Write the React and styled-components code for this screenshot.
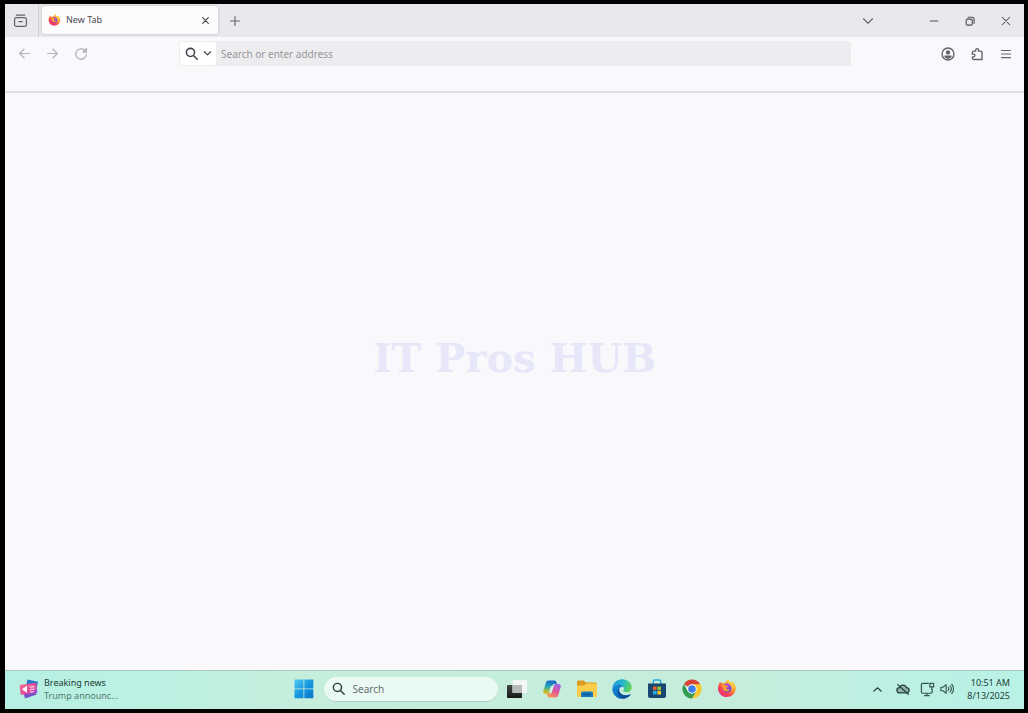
import React from "react";
import styled, { createGlobalStyle } from "styled-components";

const GlobalStyle = createGlobalStyle`
  *, *::before, *::after { box-sizing: border-box; }
  body {
    margin: 0;
    background: #000;
    font-family: "Noto Sans", "Open Sans", sans-serif;
  }
  button, input { font: inherit; color: inherit; }
  svg { display: block; flex: none; }
`;

const Desktop = styled.div`
  display: flex;
  flex-direction: column;
  min-height: 100vh;
  padding: 4px 4px 4px 5px;
  background: #000;
`;

const Browser = styled.section`
  flex: 1;
  display: flex;
  flex-direction: column;
  background: #f9f9fb;
`;

const TabStrip = styled.header`
  display: flex;
  align-items: stretch;
  height: 33px;
  background: #e9e8ed;
  color: #65646c;
`;

const IconButton = styled.button`
  display: flex;
  align-items: center;
  justify-content: center;
  flex: none;
  width: ${(p) => p.$width || 28}px;
  padding: 0;
  border: 0;
  background: transparent;
  color: ${(p) => p.$color || "#65646c"};
`;

const RecentButton = styled(IconButton)`
  padding-right: 2px;
  border-right: 1px solid #cecdd3;
`;

const Tab = styled.div`
  display: flex;
  align-items: center;
  gap: 5px;
  width: 176px;
  margin: 2px 0 3px 3px;
  padding-left: 6px;
  border-radius: 3px;
  background: #fcfcfd;
  box-shadow: 0 0 3px #b9b8be;
`;

const TabTitle = styled.span`
  flex: 1;
  font-size: 9px;
  line-height: 12px;
  color: #4b4a52;
`;

const WindowControls = styled.div`
  display: flex;
  margin-left: auto;
`;

const TabListButton = styled(IconButton)`
  margin-right: 30px;
`;

const Toolbar = styled.div`
  display: flex;
  height: 56px;
  padding: 4px 4px 0 5px;
  border-bottom: 2px solid #e2e2e5;
`;

const ToolGroup = styled.div`
  display: flex;
  width: 169px;
  height: 25px;
  justify-content: ${(p) => (p.$end ? "flex-end" : "flex-start")};
`;

const AddressBar = styled.form`
  display: flex;
  flex: 1;
  height: 25px;
  padding: 1px;
  border-radius: 3px;
  background: #ededef;
`;

const EngineButton = styled.button`
  display: flex;
  align-items: center;
  justify-content: center;
  gap: 5px;
  width: 36px;
  padding: 0;
  border: 0;
  border-radius: 2px;
  background: #fff;
  color: #45444c;
`;

const AddressInput = styled.input`
  flex: 1;
  min-width: 0;
  padding: 0 5px;
  border: 0;
  outline: 0;
  background: transparent;
  font-size: 10px;
  &::placeholder { color: #98979d; opacity: 1; }
`;

const Page = styled.main`
  flex: 1;
  display: flex;
  align-items: center;
  justify-content: center;
  padding-bottom: 48px;
`;

const Watermark = styled.h1`
  margin: 0;
  font: 700 40px/44px "DejaVu Serif", serif;
  color: #e7e7f9;
`;

const Taskbar = styled.footer`
  display: grid;
  grid-template-columns: 1fr auto 1fr;
  height: 39px;
  padding-bottom: 2px;
  border-top: 1px solid #aacbc1;
  background: linear-gradient(90deg, #b6f0e3 0%, #bcf1e2 14%, #c5eedd 28%, #c6eddc 72%, #bcf0e3 88%, #b9f1e5 100%);
  color: #28423d;
`;

const NewsButton = styled.button`
  display: flex;
  align-items: center;
  justify-self: start;
  gap: 5px;
  padding: 0 0 0 14px;
  border: 0;
  background: transparent;
  text-align: left;
  font-size: 9px;
  line-height: 13px;
`;

const Line = styled.span`
  display: block;
  color: ${(p) => (p.$muted ? "#527b70" : "#203d36")};
`;

const AppRow = styled.nav`
  display: flex;
  align-items: stretch;
  margin-left: 2px;
`;

const SearchBox = styled.label`
  display: flex;
  align-items: center;
  gap: 8px;
  align-self: center;
  width: 174px;
  height: 25px;
  margin: 0 2px;
  padding: 0 8px;
  border-radius: 13px;
  border-bottom: 1px solid #a7cfc0;
  background: #ebf9f4;
`;

const SearchInput = styled.input`
  min-width: 0;
  width: 100%;
  padding: 0;
  border: 0;
  outline: 0;
  background: transparent;
  font-size: 10px;
  line-height: 16px;
  &::placeholder { color: #65716e; opacity: 1; }
`;

const Tray = styled.div`
  display: flex;
  justify-self: end;
  padding-right: 14px;
`;

const Clock = styled.time`
  align-self: center;
  margin-left: 11px;
  text-align: right;
  font-size: 9px;
  line-height: 13px;
  color: #25403b;
`;

const Glyph = ({ size = 14, w = 1.3, children }) => (
  <svg width={size} height={size} viewBox="0 0 16 16" fill="none" stroke="currentColor" strokeWidth={w} strokeLinecap="round" strokeLinejoin="round" aria-hidden="true">
    {children}
  </svg>
);

const Magnifier = ({ size = 14, w = 1.9 }) => (
  <Glyph size={size} w={w}>
    <circle cx="6.7" cy="6.7" r="5" />
    <path d="M10.4 10.4 15 15" />
  </Glyph>
);

const Firefox = ({ size = 20 }) => {
  const id = React.useId();
  return (
    <svg width={size} height={size} viewBox="0 0 20 20" aria-hidden="true">
      <defs>
        <linearGradient id={id + "a"} x1="0.85" y1="0.1" x2="0.2" y2="0.95">
          <stop offset="0" stopColor="#ffe14a" />
          <stop offset="0.35" stopColor="#ff9a2c" />
          <stop offset="0.7" stopColor="#fb4653" />
          <stop offset="1" stopColor="#e32b80" />
        </linearGradient>
        <linearGradient id={id + "b"} x1="0.6" y1="0" x2="0.4" y2="1">
          <stop offset="0" stopColor="#a34ee0" />
          <stop offset="1" stopColor="#6b49c8" />
        </linearGradient>
      </defs>
      <path fill={`url(#${id}a)`} d="M3.2 2.4 4.700 4.500C6 4 6.800 4.100 7.600 4.200 8.700 2.900 9.700 1.700 11.200 0c.3 2.100 1.800 2.900 3.100 4.100.3-.7.2-1.500.2-2.200C17.500 4 19.200 6.700 18.800 10c-.5 4.700-4.300 8-8.900 8C4.900 18 1 14.200 1 9.400 1 6.600 2 4.500 3.200 2.400Z" />
      <circle cx="10.200" cy="9" r="4.500" fill={`url(#${id}b)`} />
      <path fill="#ff9b35" d="M4.500 6.200c1.900-1 3.700-.7 5 .5 1 .1 1.700.2 2.100.6-.7 1-1.900 1-2.400 1.800.2 1.400 2.400 1.700 3.900.8-.9 2.500-4.300 3.200-6.200 1.500C5.500 10.200 6 8.300 4.500 6.200Z" />
      <path fill="#ffd343" d="M11.200 0c-1.200 2-.9 3.700 1.300 5.300 2.300 1.700 3.200 4.200 2.100 7.200 2.200-1.900 2.600-5.100.9-7.400-1.400-1.500-4-2.700-4.300-5.100Z" opacity=".8" />
    </svg>
  );
};

const NewsIcon = () => (
  <svg width="20" height="20" viewBox="0 0 20 20" aria-hidden="true">
    <defs>
      <linearGradient id="news" x1="0" y1="0" x2="1" y2="1">
        <stop offset="0" stopColor="#f46d92" />
        <stop offset="0.6" stopColor="#e24a97" />
        <stop offset="1" stopColor="#9a4fe0" />
      </linearGradient>
    </defs>
    <path d="m8.500.5 10.500 2.300-2.500 13-11-2Z" fill="#2676cc" />
    <path d="m3 8 11-3 3.500 10.500-11.500 4Z" fill="#7150c9" />
    <rect x="1" y="5" width="17" height="10" rx="1.500" fill="url(#news)" transform="rotate(-7 9 10)" />
    <path d="m3 10.300 5-3.500v7Z" fill="#fff" />
    <path d="m10.500 8.200 5-.6M10.700 10.600l5-.6M11 13l3.500-.4" stroke="#ffd8e9" strokeWidth="1.200" />
  </svg>
);

const WindowsLogo = () => (
  <svg width="20" height="20" viewBox="0 0 20 20" aria-hidden="true">
    <defs>
      <linearGradient id="win" gradientUnits="userSpaceOnUse" x1="0" y1="0" x2="20" y2="20">
        <stop offset="0" stopColor="#54cdf6" />
        <stop offset="0.5" stopColor="#1597df" />
        <stop offset="1" stopColor="#0a73c9" />
      </linearGradient>
    </defs>
    <path d="M.5.5h9v9h-9zM10.300.5h9v9h-9zM.5 10.300h9v9h-9zM10.300 10.300h9v9h-9z" fill="url(#win)" />
  </svg>
);

const TaskViewIcon = () => (
  <svg width="20" height="20" viewBox="0 0 20 20" aria-hidden="true">
    <defs>
      <linearGradient id="dark" x1="0" y1="0" x2="0" y2="1">
        <stop offset="0" stopColor="#444" />
        <stop offset="1" stopColor="#171919" />
      </linearGradient>
    </defs>
    <rect x="0" y="6" width="15" height="13" rx="1" fill="url(#dark)" />
    <rect x="5.500" y="1" width="14.500" height="13" rx="1" fill="#f3f5f4" />
    <path d="M5.500 6H15v8H5.500z" fill="#b7bab9" />
  </svg>
);

const CopilotIcon = () => (
  <svg width="20" height="20" viewBox="0 0 20 20" aria-hidden="true">
    <defs>
      <linearGradient id="cpa" x1="0.500" y1="0" x2="0.300" y2="1">
        <stop offset="0" stopColor="#1764c8" />
        <stop offset="0.450" stopColor="#23a9bd" />
        <stop offset="0.750" stopColor="#92be49" />
        <stop offset="1" stopColor="#edb72f" />
      </linearGradient>
      <linearGradient id="cpb" x1="0.700" y1="0" x2="0.300" y2="1">
        <stop offset="0" stopColor="#9d64e8" />
        <stop offset="0.500" stopColor="#e2569b" />
        <stop offset="1" stopColor="#fb9451" />
      </linearGradient>
    </defs>
    <path d="M6.500 1.500h6c1.300 0 1.700 1 2 2l.5 1.500h-2.500c-1.400 0-2 .8-2.400 2L8.300 13c-.4 1.300-1 2-2.300 2H3.600C1.400 15 .8 13.500 1.400 11.500l2.200-7c.6-2 1.200-3 2.900-3Z" fill="url(#cpa)" />
    <path d="M13.500 18.500h-6c-1.300 0-1.700-1-2-2L5 15h2.500c1.400 0 2-.8 2.400-2l1.800-6c.4-1.300 1-2 2.300-2h2.400c2.200 0 2.800 1.500 2.200 3.500l-2.200 7c-.6 2-1.200 3-2.900 3Z" fill="url(#cpb)" />
    <path d="m8.700 7.200 2.900-.2-2 6-2.600.2Z" fill="#d7f0e3" />
  </svg>
);

const FolderIcon = () => (
  <svg width="20" height="20" viewBox="0 0 20 20" aria-hidden="true">
    <path d="M0 3c0-1 .5-1.500 1.500-1.500h5L9 3.500h9.500c1 0 1.500.5 1.500 1.500v5H0Z" fill="#d99a20" />
    <path d="M0 6.500h7L9.200 4.500H20v12.300c0 .8-.4 1.200-1.200 1.200H1.200C.4 18 0 17.600 0 16.800Z" fill="#fccc4c" />
    <path d="M4 18v-3.500c0-1.200.7-2 2-2h8c1.300 0 2 .8 2 2V18Z" fill="#1677bd" />
    <path d="M6 15.500h8" stroke="#0a568f" strokeWidth="1.300" />
  </svg>
);

const EdgeIcon = () => (
  <svg width="20" height="20" viewBox="0 0 20 20" aria-hidden="true">
    <defs>
      <linearGradient id="edgeTop" x1="0" y1="0.300" x2="1" y2="0.600">
        <stop offset="0" stopColor="#159bdb" />
        <stop offset="0.500" stopColor="#25b9c7" />
        <stop offset="1" stopColor="#67d753" />
      </linearGradient>
      <linearGradient id="edgeSide" x1="0" y1="0" x2="0.800" y2="1">
        <stop offset="0" stopColor="#1693dd" />
        <stop offset="1" stopColor="#0b5aad" />
      </linearGradient>
    </defs>
    <path d="M.4 9C.9 3.800 5 .3 10 .3c5.700 0 9.700 3.800 9.700 8 0 3.200-2.500 5-5.100 5-2.300 0-3.500-.8-3.500-1.500 0-.6 1-1 1-2.500C12 6.900 9.500 5 6.800 5 4 5 1.700 6.500.4 9Z" fill="url(#edgeTop)" />
    <path d="M.4 9C1.700 6.500 4 5 6.800 5c2.600 0 5 1.700 5.300 4-.8-1-2-1.500-3.100-.9-2.600 1.300-2 5.400.4 7 2.400 1.700 5.600 1.500 8.400.3.5-.2.8.2.5.6A9.800 9.800 0 0 1 10 19.800C4.200 19.600-.1 14.700.4 9Z" fill="url(#edgeSide)" />
    <path d="M6.700 9.200c-2.700 4.200.4 9 4.800 10.400 2.800-.4 5.200-1.700 6.800-3.600.3-.4 0-.8-.5-.6-2.800 1.200-6 1.400-8.400-.3C7.500 13.800 6.500 11.300 6.700 9.200Z" fill="#0c4d98" />
  </svg>
);

const StoreIcon = () => (
  <svg width="20" height="20" viewBox="0 0 20 20" aria-hidden="true">
    <path d="M6.300 5V2.500c0-1 .5-1.500 1.500-1.500h4.400c1 0 1.500.5 1.500 1.500V5" fill="none" stroke="#2aa8dc" strokeWidth="1.500" />
    <path d="M1 4.500h18v12c0 1.800-.7 2.500-2.500 2.500h-13C1.700 19 1 18.300 1 16.500Z" fill="#17466f" />
    <path d="M6 7.500h3.600v3.600H6z" fill="#f05b35" />
    <path d="M10.400 7.500H14v3.600h-3.600z" fill="#8bc63e" />
    <path d="M6 11.900h3.600v3.600H6z" fill="#25aee7" />
    <path d="M10.400 11.900H14v3.600h-3.600z" fill="#ffc832" />
  </svg>
);

const ChromeIcon = () => (
  <svg width="20" height="20" viewBox="0 0 20 20" aria-hidden="true">
    <path d="M10 10 1.770 5.250a9.500 9.500 0 0 1 16.460 0Z" fill="#d94335" />
    <path d="M10 5.250h8.230A9.500 9.500 0 0 1 10 19.500l4.100-7.100Z" fill="#f8c82e" />
    <path d="M5.900 12.400 1.770 5.250A9.500 9.500 0 0 0 10 19.500l4.100-7.100Z" fill="#349b51" />
    <circle cx="10" cy="10" r="4.750" fill="#fff" />
    <circle cx="10" cy="10" r="3.800" fill="#3b7de9" />
  </svg>
);

const pinned = [
  ["Task view", TaskViewIcon],
  ["Copilot", CopilotIcon],
  ["File Explorer", FolderIcon],
  ["Microsoft Edge", EdgeIcon],
  ["Microsoft Store", StoreIcon],
  ["Google Chrome", ChromeIcon],
  ["Firefox", Firefox],
];

export default function App() {
  return (
    <Desktop>
      <GlobalStyle />
      <Browser>
        <TabStrip>
          <RecentButton $width={34} aria-label="Recent browsing">
            <Glyph size={15} w={1.300}>
              <path d="M3.500 2.200h9" />
              <rect x="1.700" y="5" width="12.600" height="9.300" rx="1.800" />
              <path d="M6.200 9.200h3.600" />
            </Glyph>
          </RecentButton>
          <Tab>
            <Firefox size={13} />
            <TabTitle>New Tab</TabTitle>
            <IconButton $width={26} $color="#45444b" aria-label="Close tab">
              <Glyph size={9} w={2}><path d="m3 3 10 10M13 3 3 13" /></Glyph>
            </IconButton>
          </Tab>
          <IconButton $width={34} aria-label="New tab">
            <Glyph size={12} w={1.500}><path d="M8 2v12M2 8h12" /></Glyph>
          </IconButton>
          <WindowControls>
            <TabListButton $width={36} aria-label="List all tabs">
              <Glyph size={12} w={1.500}><path d="m2 5 6 6 6-6" /></Glyph>
            </TabListButton>
            <IconButton $width={36} $color="#504f56" aria-label="Minimize">
              <Glyph size={12} w={1.500}><path d="M3 8h10" /></Glyph>
            </IconButton>
            <IconButton $width={36} $color="#504f56" aria-label="Restore">
              <Glyph size={12} w={1.500}>
                <rect x="3" y="5.500" width="8" height="8" rx="1.500" />
                <path d="M5.500 3h5.500q2.500 0 2.500 2.500V11" />
              </Glyph>
            </IconButton>
            <IconButton $width={36} $color="#504f56" aria-label="Close">
              <Glyph size={12} w={1.400}><path d="m3 3 10 10M13 3 3 13" /></Glyph>
            </IconButton>
          </WindowControls>
        </TabStrip>

        <Toolbar>
          <ToolGroup>
            <IconButton $color="#b5b4ba" aria-label="Back">
              <Glyph size={13} w={1.500}><path d="M14 8H2m5.500-5.500L2 8l5.500 5.500" /></Glyph>
            </IconButton>
            <IconButton $color="#b5b4ba" aria-label="Forward">
              <Glyph size={13} w={1.500}><path d="M2 8h12M8.500 2.500 14 8l-5.500 5.500" /></Glyph>
            </IconButton>
            <IconButton $width={30} $color="#b5b4ba" aria-label="Reload">
              <Glyph w={1.500}>
                <path d="M14 8.500A6 6 0 1 1 12.200 3.700L14 5.300" />
                <path d="M14.200 1.800v4h-4Z" fill="currentColor" />
              </Glyph>
            </IconButton>
          </ToolGroup>
          <AddressBar onSubmit={(e) => e.preventDefault()}>
            <EngineButton type="button" aria-label="Choose search engine">
              <Magnifier size={13} />
              <Glyph size={9} w={2.200}><path d="m2.500 5 5.500 5.500L13.500 5" /></Glyph>
            </EngineButton>
            <AddressInput aria-label="Address" placeholder="Search or enter address" />
          </AddressBar>
          <ToolGroup $end>
            <IconButton aria-label="Account">
              <Glyph size={14} w={1.600}>
                <circle cx="8" cy="8" r="6.800" />
                <circle cx="8" cy="6.200" r="1.700" fill="currentColor" />
                <path d="M4.500 10.500h7q-1.200 2.300-3.500 2.300t-3.500-2.300Z" fill="currentColor" />
              </Glyph>
            </IconButton>
            <IconButton $width={30} aria-label="Extensions">
              <Glyph size={14} w={1.600}>
                <path d="M2.800 6.800V6q0-1.300 1.300-1.300H6.500V3.400a1.600 1.600 0 0 1 3.200 0v1.300h2.500q1.500 0 1.500 1.500v8.100H4.300q-1.500 0-1.500-1.500v-1.500H4a1.600 1.600 0 0 0 0-3.200H2.200" />
              </Glyph>
            </IconButton>
            <IconButton aria-label="Menu">
              <Glyph size={12} w={1.600}><path d="M2 3.300h12M2 8h12M2 12.700h12" /></Glyph>
            </IconButton>
          </ToolGroup>
        </Toolbar>
        <Page><Watermark>IT Pros HUB</Watermark></Page>
      </Browser>

      <Taskbar>
        <NewsButton>
          <NewsIcon />
          <span>
            <Line>Breaking news</Line>
            <Line $muted>Trump announc...</Line>
          </span>
        </NewsButton>
        <AppRow aria-label="Taskbar">
          <IconButton $width={35} aria-label="Start"><WindowsLogo /></IconButton>
          <SearchBox>
            <Magnifier size={13} w={1.800} />
            <SearchInput aria-label="Search" placeholder="Search" />
          </SearchBox>
          {pinned.map(([name, Icon]) => (
            <IconButton key={name} $width={35} aria-label={name}><Icon /></IconButton>
          ))}
        </AppRow>
        <Tray>
          <IconButton $width={24} $color="#24453e" aria-label="Show hidden icons">
            <Glyph size={11} w={1.700}><path d="m2.500 10.500 5.500-5 5.500 5" /></Glyph>
          </IconButton>
          <IconButton $width={27} $color="#24453e" aria-label="Cloud sync is off">
            <Glyph size={14} w={1.500}>
              <path d="M4 12.500a3 3 0 0 1 0-6A4.200 4.200 0 0 1 12 6.500a3 3 0 0 1 0 6Z" fill="#8fb0a7" />
              <path d="m2 3 12 11" />
            </Glyph>
          </IconButton>
          <IconButton $width={22} $color="#35564f" aria-label="Network">
            <Glyph size={15} w={1.300}>
              <path d="M9 1.500H2.800Q1.500 1.500 1.500 2.800v7.900Q1.500 12 2.800 12h8.900q1.300 0 1.300-1.300V8M7.300 12v2.500M4.800 14.500h5M12.500 5.500V8" />
              <path d="M10.500 1.500h4v3.800h-4Z" />
            </Glyph>
          </IconButton>
          <IconButton $width={18} $color="#35564f" aria-label="Volume">
            <Glyph size={14} w={1.300}>
              <path d="M1 6h2.500L7 3v10L3.500 10H1ZM9.300 6q1.500 2 0 4M11.500 4.300q3 3.700 0 7.400M13.500 2.800q4 5.200 0 10.400" />
            </Glyph>
          </IconButton>
          <Clock dateTime="2025-08-13T10:51">
            <Line>10:51 AM</Line>
            <Line>8/13/2025</Line>
          </Clock>
        </Tray>
      </Taskbar>
    </Desktop>
  );
}
